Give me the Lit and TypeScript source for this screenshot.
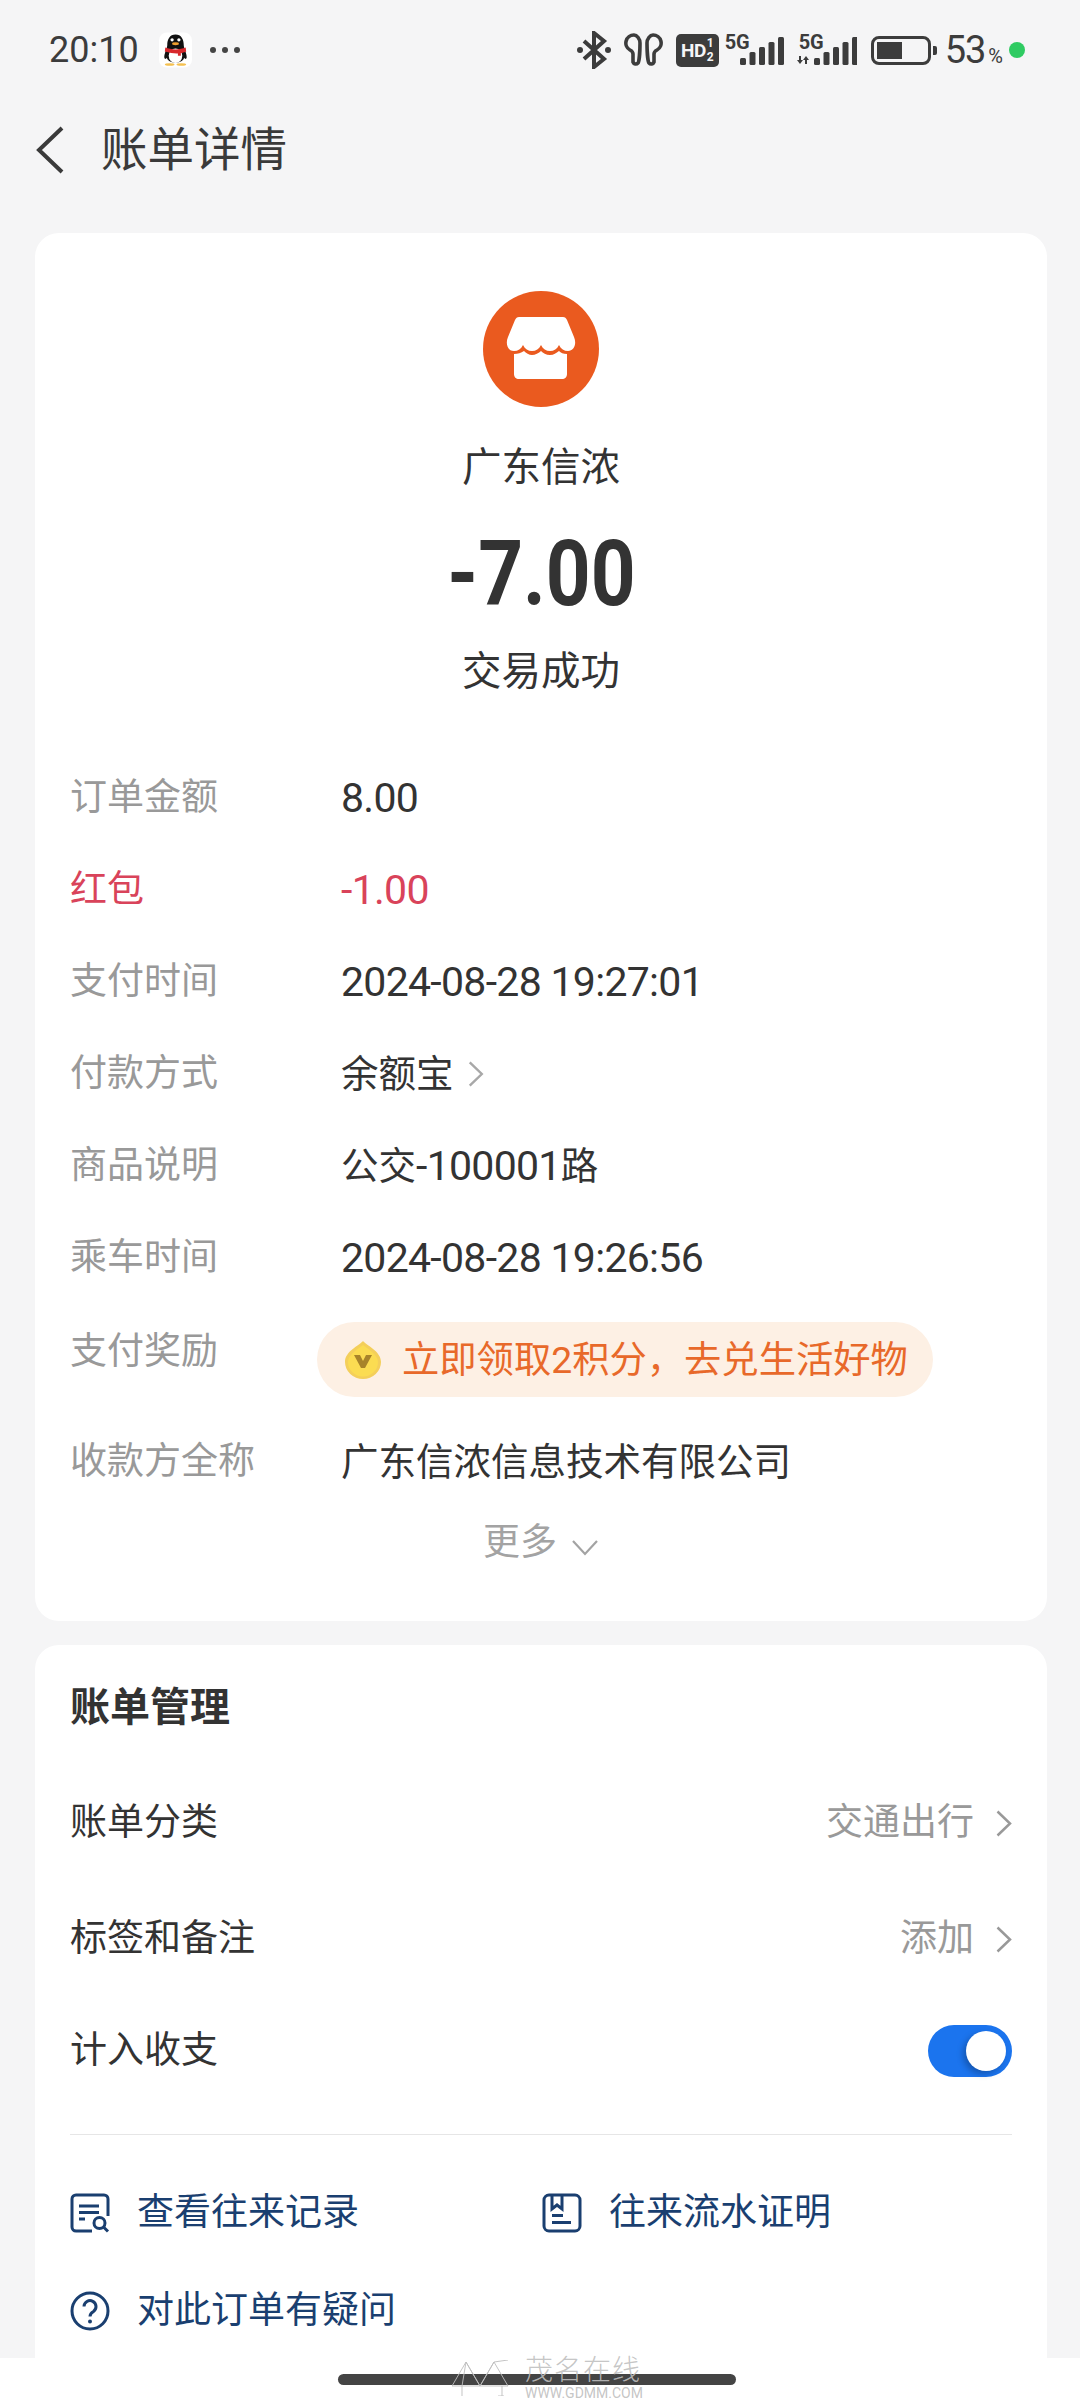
import { css, html, LitElement, svg } from 'lit'
import { customElement } from 'lit/decorators.js'

const chevronRight = (cls: string) => html`
  <svg class=${cls} viewBox="0 0 16 27" fill="none" stroke="currentColor" stroke-width="2.500">
    <path d="M1.500 1.500l12.500 12-12.500 12"></path>
  </svg>
`

const signalBars = (heights: number[]) =>
  heights.map(
    (h, i) => svg`<rect x=${i * 9.5} y=${28 - h} width="6" height=${h} rx="1.500" fill="#3c3c3c"></rect>`,
  )

@customElement('app-root')
export class AppRoot extends LitElement {
  private renderStatusBar() {
    return html`
      <div class="status">
        <span class="time">20:10</span>
        <svg class="qq" viewBox="0 0 34 36">
          <rect width="34" height="36" rx="8" fill="#fff"></rect>
          <path d="M17 2c-6 0-8.500 5-8.500 11 0 3-3.500 9-3 13 .5 2 2 1 2.500 0 1 3 4 5 9 5s8-2 9-5c.5 1 2 2 2.500 0 .5-4-3-10-3-13 0-6-2.500-11-8.500-11z" fill="#111"></path>
          <ellipse cx="17" cy="24" rx="7" ry="7.500" fill="#fff"></ellipse>
          <path d="M6.500 15.500c6 2.500 15 2.500 21 0l.5 4c-2.500 1-4 1.500-5.500 1.700v2.800h-3v-2.500c-4 .2-8-.5-13.500-2z" fill="#d8282c"></path>
          <ellipse cx="17" cy="11.500" rx="3.500" ry="1.500" fill="#f0a030"></ellipse>
          <circle cx="13.500" cy="7.500" r="1.700" fill="#fff"></circle>
          <circle cx="20.500" cy="7.500" r="1.700" fill="#fff"></circle>
          <ellipse cx="11" cy="33" rx="5" ry="1.300" fill="#f4c050"></ellipse>
          <ellipse cx="23" cy="33" rx="5" ry="1.300" fill="#f4c050"></ellipse>
        </svg>
        <span class="dots"><i></i><i></i><i></i></span>
        <span class="spacer"></span>
        <svg class="bt" viewBox="0 0 34 38" fill="none" stroke="#3c3c3c" stroke-width="4">
          <path d="M7 10l20 18-10 8V2l10 8L7 28"></path>
          <circle cx="3" cy="19" r="3" fill="#3c3c3c" stroke="none"></circle>
          <circle cx="31" cy="19" r="3" fill="#3c3c3c" stroke="none"></circle>
        </svg>
        <svg class="buds" viewBox="0 0 39 34" fill="none" stroke="#3c3c3c" stroke-width="3.600">
          <path d="M10 2a8 8 0 0 0-4 15c2 1 3 2 3 4v8a3 3 0 0 0 5 1c1-1 2-12 2-20 0-4-3-8-6-8z"></path>
          <path d="M29 2a8 8 0 0 1 4 15c-2 1-3 2-3 4v8a3 3 0 0 1-5 1c-1-1-2-12-2-20 0-4 3-8 6-8z"></path>
        </svg>
        <span class="hd">HD<span class="hd-frac"><b>1</b><b>2</b></span></span>
        <span class="net">
          <span class="net-label">5G</span>
          <svg viewBox="0 0 44 28" class="bars">${signalBars([7, 13, 18, 23, 28])}</svg>
        </span>
        <span class="net net-wide">
          <span class="net-label">5G</span>
          <svg viewBox="0 0 60 28" class="bars-wide">
            <path d="M2 19h2v4h2l-3 4-3-4h2zM10 27H8v-4H6l3-4 3 4h-2z" fill="#3c3c3c"></path>
            <g transform="translate(17 0)">${signalBars([7, 13, 18, 23, 28])}</g>
          </svg>
        </span>
        <span class="battery"><span class="battery-fill"></span></span>
        <span class="battery-cap"></span>
        <span class="pct">53<small>%</small></span>
        <span class="green-dot"></span>
      </div>
    `
  }

  private renderDetailRows() {
    return html`
      <div class="row">
        <span class="label">订单金额</span><span class="value"><span class="num">8.00</span></span>
      </div>
      <div class="row red">
        <span class="label">红包</span><span class="value"><span class="num">-1.00</span></span>
      </div>
      <div class="row">
        <span class="label">支付时间</span><span class="value"><span class="num">2024-08-28 19:27:01</span></span>
      </div>
      <div class="row">
        <span class="label">付款方式</span>
        <span class="value with-chevron">余额宝${chevronRight('chev-small')}</span>
      </div>
      <div class="row">
        <span class="label">商品说明</span><span class="value">公交<span class="num">-100001</span>路</span>
      </div>
      <div class="row">
        <span class="label">乘车时间</span><span class="value"><span class="num">2024-08-28 19:26:56</span></span>
      </div>
      <div class="row reward-row">
        <span class="label">支付奖励</span>
        <span class="pill">
          <svg class="coin" viewBox="0 0 36 38">
            <path d="M18 0c3 4 18 10 18 21a18 17 0 0 1-36 0C0 10 15 4 18 0z" fill="#f4cf5a"></path>
            <path d="M18 4c3 3 15 9 15 17a15 14.500 0 0 1-30 0C3 13 15 7 18 4z" fill="#fbdc52"></path>
            <path d="M9 14h6l3 6 3-6h6l-7 13h-4z" fill="#a8842a"></path>
          </svg>
          <span>立即领取2积分，去兑生活好物</span>
        </span>
      </div>
      <div class="row">
        <span class="label">收款方全称</span><span class="value">广东信浓信息技术有限公司</span>
      </div>
    `
  }

  render() {
    return html`
      ${this.renderStatusBar()}
      <header class="nav">
        <svg class="back" viewBox="0 0 30 50" fill="none" stroke="#3a3a3a" stroke-width="4">
          <path d="M27 3L4 25l23 22"></path>
        </svg>
        <h1>账单详情</h1>
      </header>

      <section class="card detail">
        <div class="summary">
          <svg class="shop" viewBox="0 0 116 116">
            <circle cx="58" cy="58" r="58" fill="#ea5a1f"></circle>
            <path d="M36 26h44c2 0 3 1 4 3l7 17c3 7 0 14-6 14-4 0-7-2-9-6-2 4-5 6-9 6s-7-2-9-6c-2 4-5 6-9 6s-7-2-9-6c-2 4-5 6-9 6-6 0-9-7-6-14l7-17c1-2 2-3 4-3z" fill="#fff"></path>
            <path d="M31 63c4 0 7-1 10-3 2 2 5 4 8 4s7-2 9-4c2 2 5 4 9 4s6-2 9-4c2 2 4 3 8 3v20c0 3-2 5-5 5H36c-3 0-5-2-5-5z" fill="#fff"></path>
          </svg>
          <div class="merchant">广东信浓</div>
          <div class="amount">-7.00</div>
          <div class="result">交易成功</div>
        </div>
        <div class="rows">${this.renderDetailRows()}</div>
        <div class="more">
          <span>更多</span>
          <svg class="chev-down" viewBox="0 0 28 20" fill="none" stroke="currentColor" stroke-width="2.200">
            <path d="M2 3l12 13L26 3"></path>
          </svg>
        </div>
      </section>

      <section class="card manage">
        <h2>账单管理</h2>
        <div class="manage-row first">
          <span>账单分类</span>
          <span class="manage-value">交通出行${chevronRight('chev')}</span>
        </div>
        <div class="manage-row">
          <span>标签和备注</span>
          <span class="manage-value">添加${chevronRight('chev')}</span>
        </div>
        <div class="manage-row toggle-row">
          <span>计入收支</span>
          <span class="switch"><span class="knob"></span></span>
        </div>
        <div class="divider"></div>
        <div class="links">
          <div class="link">
            <svg class="link-icon" viewBox="0 0 40 40" fill="none" stroke="#1a3f70" stroke-width="3">
              <path d="M22 38H6a4 4 0 0 1-4-4V6a4 4 0 0 1 4-4h28a4 4 0 0 1 4 4v17"></path>
              <path d="M9 13h20M9 19.500h20M9 26h6"></path>
              <circle cx="29.500" cy="30" r="5.500"></circle>
              <path d="M33.500 34l4.500 4.500"></path>
            </svg>
            <span>查看往来记录</span>
          </div>
          <div class="link">
            <svg class="link-icon" viewBox="0 0 40 40" fill="none" stroke="#1a3f70" stroke-width="3">
              <rect x="2" y="2" width="36" height="36" rx="5"></rect>
              <path d="M10 3v13l5-4 5 4V3M10 22.500h11M10 29.500h19"></path>
            </svg>
            <span>往来流水证明</span>
          </div>
          <div class="link">
            <svg class="link-icon" viewBox="0 0 40 40" fill="none" stroke="#1a3f70" stroke-width="3">
              <circle cx="20" cy="20" r="18"></circle>
              <path d="M14 15.500a6 6 0 1 1 9.500 5c-2.500 1.500-3.500 2.500-3.500 5"></path>
              <circle cx="20" cy="30.500" r="2" fill="#1a3f70" stroke="none"></circle>
            </svg>
            <span>对此订单有疑问</span>
          </div>
        </div>
      </section>

      <footer class="home-area">
        <span class="home-bar"></span>
        <span class="watermark">
          <svg class="wm-logo" viewBox="0 0 58 36" fill="none" stroke="currentColor" stroke-width="1">
            <path d="M0 26L14 2l14 24 14-24 14-2M0 26h56M14 2l-4 24M14 2l14 24M42 2L28 26M42 2l14 24M10 26v10M50 26v10M46 36h6"></path>
          </svg>
          <span class="wm-text">
            <b>茂名在线</b>
            <small>WWW.GDMM.COM</small>
          </span>
        </span>
      </footer>
    `
  }

  static styles = css`
    :host {
      display: block;
      width: 1080px;
      height: 2400px;
      overflow: hidden;
      background: #f5f5f6;
      color: #333;
      font-family: Roboto, 'Noto Sans CJK SC', sans-serif;
    }

    .status {
      display: flex;
      align-items: center;
      height: 100px;
      padding: 0 55px 0 49px;
      box-sizing: border-box;
      color: #3c3c3c;
    }

    .time {
      font-size: 36px;
      font-weight: 400;
      margin-right: 20px;
    }

    .qq {
      width: 33px;
      height: 36px;
      margin-right: 18px;
    }

    .dots {
      display: flex;
      gap: 6px;
    }

    .dots i {
      width: 6px;
      height: 6px;
      border-radius: 50%;
      background: #444;
    }

    .spacer {
      flex: 1;
    }

    .bt {
      width: 34px;
      height: 38px;
      margin-right: 13px;
    }

    .buds {
      width: 39px;
      height: 34px;
      margin-right: 13px;
    }

    .hd {
      display: flex;
      align-items: center;
      justify-content: center;
      width: 43px;
      height: 33px;
      border-radius: 5px;
      background: #3c3c3c;
      color: #f5f5f6;
      font-size: 19px;
      font-weight: 700;
      letter-spacing: -0.5px;
      margin-right: 6px;
    }

    .hd-frac {
      display: flex;
      flex-direction: column;
      font-size: 12px;
      line-height: 14px;
      margin-left: 1px;
    }

    .hd-frac b {
      font-weight: 700;
    }

    .net {
      position: relative;
      display: block;
      width: 59px;
      height: 33px;
      margin-right: 13px;
    }

    .net-wide {
      width: 60px;
      margin-right: 14px;
    }

    .net-label {
      position: absolute;
      left: 0;
      top: 0;
      font-size: 20px;
      font-weight: 700;
      line-height: 16px;
    }

    .net-wide .net-label {
      left: 2px;
    }

    .bars,
    .bars-wide {
      position: absolute;
      right: 0;
      bottom: 2px;
      height: 28px;
    }

    .bars {
      width: 44px;
    }

    .bars-wide {
      width: 60px;
    }

    .battery {
      display: block;
      width: 60px;
      height: 29px;
      box-sizing: border-box;
      padding: 3px;
      border: 3px solid #3c3c3c;
      border-radius: 8px;
    }

    .battery-fill {
      display: block;
      width: 25px;
      height: 100%;
      background: #3c3c3c;
    }

    .battery-cap {
      width: 4px;
      height: 9px;
      border-radius: 0 2px 2px 0;
      background: #3c3c3c;
      margin: 0 8px 0 2px;
    }

    .pct {
      font-size: 38px;
      font-weight: 400;
      letter-spacing: -1px;
      line-height: 1;
    }

    .pct small {
      font-size: 20px;
      margin-left: 3px;
      letter-spacing: 0;
    }

    .green-dot {
      width: 16px;
      height: 16px;
      border-radius: 50%;
      background: #2fcb62;
      margin-left: 6px;
    }

    .nav {
      display: flex;
      align-items: center;
      height: 100px;
      padding-left: 35px;
    }

    .back {
      width: 30px;
      height: 50px;
      margin-right: 36px;
    }

    h1 {
      margin: 0;
      font-size: 46.5px;
      font-weight: 400;
      line-height: 1;
      color: #3a3a3a;
    }

    .card {
      margin: 0 33px 0 35px;
      background: #fff;
      border-radius: 24px;
    }

    .detail {
      height: 1388px;
      margin-top: 33px;
      margin-bottom: 24px;
      padding-top: 58px;
      box-sizing: border-box;
    }

    .summary {
      display: flex;
      flex-direction: column;
      align-items: center;
    }

    .shop {
      width: 116px;
      height: 116px;
    }

    .merchant,
    .result {
      font-size: 39.5px;
      line-height: 56px;
      color: #333;
    }

    .merchant {
      margin-top: 33px;
    }

    .amount {
      margin-top: 23px;
      font-size: 91px;
      font-weight: 700;
      line-height: 110px;
      color: #333;
      transform: scaleX(0.86);
    }

    .result {
      margin-top: 15px;
    }

    .rows {
      margin-top: 52px;
    }

    .row {
      display: flex;
      align-items: center;
      height: 92px;
      padding-left: 35px;
      font-size: 37px;
      line-height: 54px;
    }

    .label {
      flex: none;
      width: 271px;
      color: #999;
    }

    .value {
      display: flex;
      align-items: center;
      font-size: 37.5px;
      color: #333;
    }

    .num {
      font-size: 41px;
      letter-spacing: -0.7px;
      white-space: pre;
    }

    .row.red .label,
    .row.red .value {
      color: #d9435a;
    }

    .chev-small {
      width: 16px;
      height: 26px;
      margin-left: 14px;
      color: #a8a8a8;
    }

    .reward-row {
      height: 112px;
      align-items: flex-start;
      padding-top: 21px;
      box-sizing: border-box;
    }

    .reward-row .label {
      width: 247px;
    }

    .pill {
      display: flex;
      align-items: center;
      height: 75px;
      margin-top: -3px;
      padding: 0 25px 0 28px;
      border-radius: 38px;
      background: #fdf0e4;
      color: #e8692a;
      font-size: 37.3px;
      white-space: nowrap;
    }

    .coin {
      width: 36px;
      height: 38px;
      margin-right: 21px;
    }

    .more {
      display: flex;
      align-items: center;
      justify-content: center;
      gap: 14px;
      margin-top: 8px;
      font-size: 37px;
      line-height: 54px;
      color: #a3a3a3;
    }

    .chev-down {
      width: 28px;
      height: 20px;
      margin-top: 10px;
    }

    .manage {
      height: 713px;
      padding: 0 35px;
      box-sizing: border-box;
      overflow: hidden;
      border-radius: 24px 24px 0 0;
    }

    h2 {
      margin: 0;
      padding-top: 37px;
      font-size: 40px;
      font-weight: 700;
      line-height: 52px;
      color: #333;
    }

    .manage-row {
      display: flex;
      align-items: center;
      justify-content: space-between;
      height: 116px;
      font-size: 37px;
      line-height: 54px;
      color: #333;
    }

    .manage-row.first {
      margin-top: 31px;
    }

    .toggle-row {
      height: 107px;
    }

    .manage-value {
      display: flex;
      align-items: center;
      color: #999;
    }

    .chev {
      width: 16px;
      height: 27px;
      margin-left: 22px;
      color: #999;
    }

    .switch {
      display: flex;
      align-items: center;
      justify-content: flex-end;
      box-sizing: border-box;
      width: 84px;
      height: 52px;
      padding-right: 6px;
      border-radius: 26px;
      background: #1b74ee;
    }

    .knob {
      width: 40px;
      height: 40px;
      border-radius: 50%;
      background: #fff;
      box-shadow: -3px 3px 6px rgba(0, 0, 0, 0.25);
    }

    .divider {
      height: 1px;
      margin-top: 30px;
      background: #e6e6e6;
    }

    .links {
      display: grid;
      grid-template-columns: 472px 1fr;
      row-gap: 52px;
      margin-top: 55px;
    }

    .link {
      display: flex;
      align-items: center;
      gap: 27px;
      font-size: 37px;
      line-height: 46px;
      color: #1a3f70;
    }

    .link-icon {
      width: 40px;
      height: 40px;
      flex: none;
    }

    .home-area {
      position: relative;
      height: 42px;
      background: #fff;
    }

    .home-bar {
      position: absolute;
      left: 338px;
      top: 16px;
      width: 398px;
      height: 11px;
      border-radius: 6px;
      background: #444;
    }

    .watermark {
      position: absolute;
      left: 452px;
      top: -1px;
      display: flex;
      gap: 15px;
      color: rgba(190, 190, 190, 0.9);
    }

    .wm-logo {
      width: 58px;
      height: 36px;
      margin-top: 3px;
    }

    .wm-text {
      display: flex;
      flex-direction: column;
    }

    .wm-text b {
      font-size: 28px;
      font-weight: 300;
      line-height: 28px;
      letter-spacing: 1px;
    }

    .wm-text small {
      margin-top: 2px;
      font-size: 14px;
      line-height: 12px;
      white-space: nowrap;
    }
  `
}
